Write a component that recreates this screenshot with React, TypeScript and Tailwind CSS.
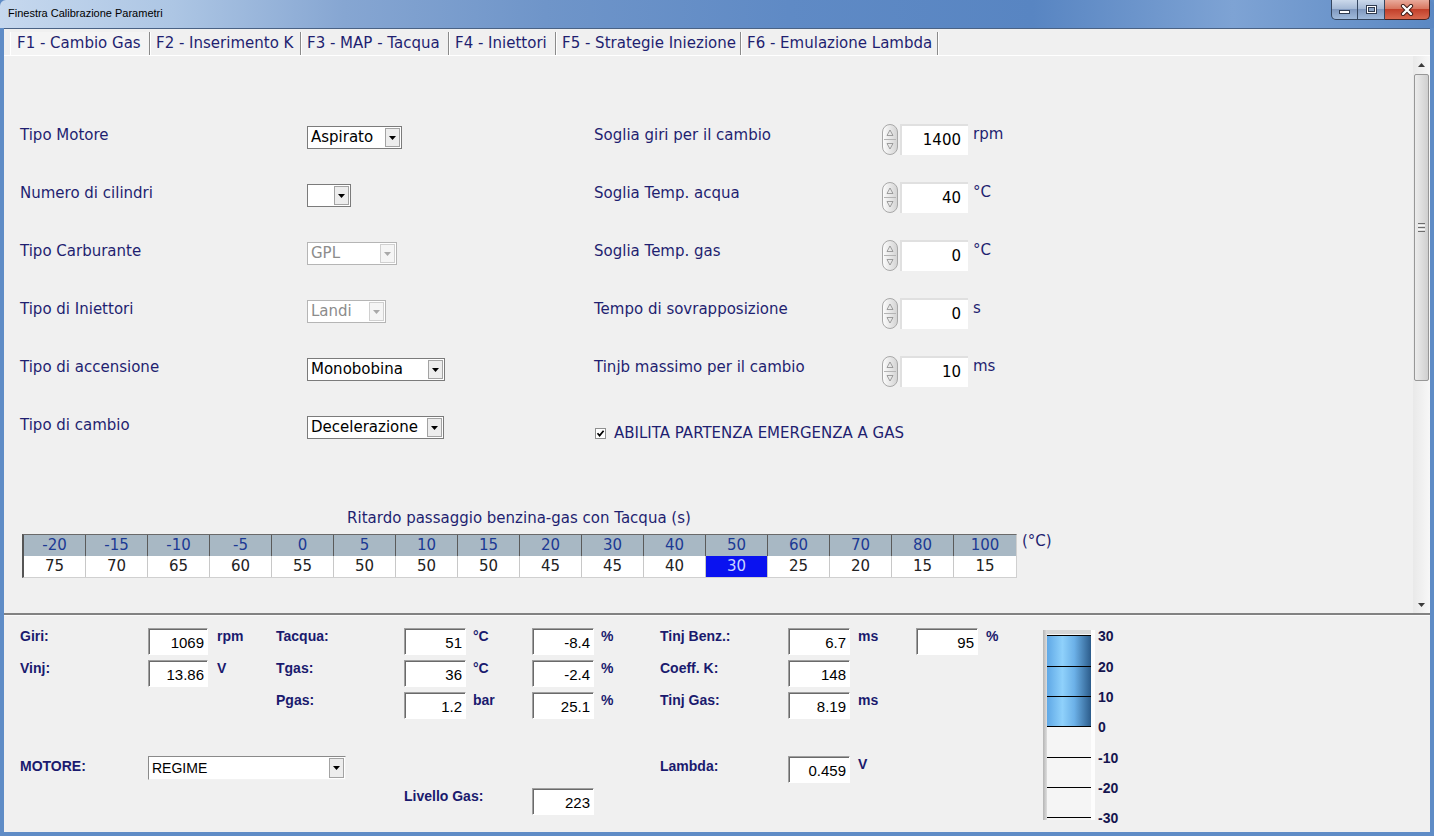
import React from 'react';

const TEMPS = ['-20', '-15', '-10', '-5', '0', '5', '10', '15', '20', '30', '40', '50', '60', '70', '80', '100'];
const DELAYS = ['75', '70', '65', '60', '55', '50', '50', '50', '45', '45', '40', '30', '25', '20', '15', '15'];

const TABS = [
  { label: 'F1 - Cambio Gas', w: 'w-[140px]', active: true },
  { label: 'F2 - Inserimento K', w: 'w-[151px]' },
  { label: 'F3 - MAP - Tacqua', w: 'w-[148px]' },
  { label: 'F4 - Iniettori', w: 'w-[107px]' },
  { label: 'F5 - Strategie Iniezione', w: 'w-[185px]' },
  { label: 'F6 - Emulazione Lambda', w: 'w-[197px]' },
];

function Caret({ disabled }: { disabled?: boolean }) {
  return (
    <svg width="7" height="4" viewBox="0 0 7 4">
      <path d="M0 0h7L3.5 4z" fill={disabled ? '#a9a9a9' : '#000'} />
    </svg>
  );
}

function Combo({ value, className, disabled }: { value: string; className: string; disabled?: boolean }) {
  return (
    <div
      className={`flex h-[23px] bg-white border ${
        disabled ? 'border-[#b5b5b5] text-[#8c8c8c]' : 'border-[#7b7b7b] text-black'
      } ${className}`}
    >
      <div className="flex-1 overflow-hidden whitespace-nowrap pl-[3px] text-[15px] leading-[21px]">{value}</div>
      <div
        className={`m-[1px] flex w-[15px] items-center justify-center border ${
          disabled ? 'border-[#d0d0d0] bg-[#f5f5f5]' : 'border-[#a3a3a3] bg-[#ededed]'
        }`}
      >
        <Caret disabled={disabled} />
      </div>
    </div>
  );
}

function Spin({ value, unit }: { value: string; unit: string }) {
  return (
    <div className="mt-[9px] flex items-start">
      <svg width="17" height="31" viewBox="0 0 17 31">
        <defs>
          <linearGradient id="spinGrad" x1="0" x2="1">
            <stop offset="0" stopColor="#fdfdfd" />
            <stop offset="1" stopColor="#d3d3d3" />
          </linearGradient>
        </defs>
        <rect x="0.5" y="0.5" width="15" height="30" rx="7.5" fill="url(#spinGrad)" stroke="#a8a8a8" />
        <line x1="2" y1="15.5" x2="14" y2="15.5" stroke="#b4b4b4" />
        <path d="M5 11.5 L8 6 L11 11.5 Z" fill="none" stroke="#8a8a8a" strokeWidth="0.8" />
        <path d="M5 19.5 L8 25 L11 19.5 Z" fill="none" stroke="#8a8a8a" strokeWidth="0.8" />
      </svg>
      <div className="ml-[1px] h-[31px] w-[68px] border-l-2 border-t-2 border-[#e0e0e0] bg-white pr-[7px] text-right text-[15px] leading-[29px] text-black">
        {value}
      </div>
      <span className="ml-[5px] mt-[3px] text-[15px] leading-[14px] text-[#1f1f70]">{unit}</span>
    </div>
  );
}

function Row({ children }: { children: React.ReactNode }) {
  return <div className="flex h-[58px] items-center">{children}</div>;
}

function Label({ children, className = '' }: { children: React.ReactNode; className?: string }) {
  return <div className={`text-[15px] text-[#1f1f70] ${className}`}>{children}</div>;
}

function Box({ value, className = '' }: { value: string; className?: string }) {
  return (
    <div
      className={`h-[27px] border border-b-white border-l-[#a0a0a0] border-r-white border-t-[#a0a0a0] bg-white pr-[3px] text-right text-[15px] leading-[27px] text-black shadow-[inset_1px_1px_0_#6a6a6a] ${className}`}
    >
      {value}
    </div>
  );
}

function BLabel({ children, className = '' }: { children: React.ReactNode; className?: string }) {
  return <div className={`pt-[1px] text-[14px] font-bold leading-[14px] text-[#1a1a6e] ${className}`}>{children}</div>;
}

function Unit({ children, className = '' }: { children: React.ReactNode; className?: string }) {
  return <div className={`pt-[1px] text-[14px] font-bold leading-[14px] text-[#1a1a6e] ${className}`}>{children}</div>;
}

function Gauge() {
  const ticks = [5, 36, 66, 96, 127, 157, 187];
  const labels = ['30', '20', '10', '0', '-10', '-20', '-30'];
  return (
    <svg width="90" height="198" viewBox="0 0 90 198" overflow="visible" className="mt-[2px]">
      <defs>
        <linearGradient id="gaugeFill" x1="0" x2="1">
          <stop offset="0" stopColor="#5fa8e6" />
          <stop offset="0.35" stopColor="#8fd1fb" />
          <stop offset="0.62" stopColor="#6cb1e8" />
          <stop offset="1" stopColor="#2c5c8b" />
        </linearGradient>
        <linearGradient id="gaugeEdge" x1="0" x2="1">
          <stop offset="0" stopColor="#b4b4b4" />
          <stop offset="1" stopColor="#dedede" />
        </linearGradient>
      </defs>
      <rect x="0" y="0" width="52" height="190" fill="#f5f5f5" />
      <rect x="0" y="0" width="52" height="4" fill="#d6d6d6" />
      <rect x="0" y="0" width="4" height="190" fill="url(#gaugeEdge)" />
      <rect x="48" y="0" width="4" height="190" fill="#fdfdfd" />
      <rect x="4" y="5" width="44" height="91" fill="url(#gaugeFill)" />
      {ticks.map((y) => (
        <line key={y} x1="4" x2="48" y1={y + 0.5} y2={y + 0.5} stroke="#000" strokeWidth="1" />
      ))}
      {labels.map((l, i) => (
        <text
          key={l}
          x="55"
          y={ticks[i] + 6}
          fontFamily="Liberation Sans, Arial, sans-serif"
          fontWeight="bold"
          fontSize="14"
          fill="#15154f"
        >
          {l}
        </text>
      ))}
    </svg>
  );
}

function ScrollBar() {
  return (
    <div className="flex w-[17px] flex-col bg-[linear-gradient(to_right,#e9e9e9,#f7f7f7)]">
      <div className="flex h-[17px] items-center justify-center">
        <svg width="7" height="4" viewBox="0 0 7 4">
          <path d="M0 4h7L3.5 0z" fill="#3c3c3c" />
        </svg>
      </div>
      <div className="flex flex-1 flex-col px-[1px]">
        <div className="mt-[1px] flex h-[307px] items-center justify-center rounded-[2px] border border-[#979797] bg-[linear-gradient(to_right,#ececec,#dedede_50%,#cfcfcf)]">
          <div className="flex flex-col gap-[1px]">
            <div className="h-[1px] w-[7px] bg-[#6d6d6d]" />
            <div className="h-[1px] w-[7px] bg-[#f8f8f8]" />
            <div className="h-[1px] w-[7px] bg-[#6d6d6d]" />
            <div className="h-[1px] w-[7px] bg-[#f8f8f8]" />
            <div className="h-[1px] w-[7px] bg-[#6d6d6d]" />
          </div>
        </div>
      </div>
      <div className="flex h-[17px] items-center justify-center">
        <svg width="7" height="4" viewBox="0 0 7 4">
          <path d="M0 0h7L3.5 4z" fill="#3c3c3c" />
        </svg>
      </div>
    </div>
  );
}

function TitleBar() {
  return (
    <div className="flex h-[28px] items-start justify-between rounded-t-[6px] bg-[linear-gradient(to_right,#c6d8ee_0%,#adc6e4_12%,#86a6d2_24%,#6f95c9_38%,#5f8ac5_55%,#5885c2_72%,#7ea3d4_86%,#5b88c3_100%)]">
      <div className="pl-[8px] pt-[7px] font-['Liberation_Sans',Arial,sans-serif] text-[11px] leading-[13px] text-black">
        Finestra Calibrazione Parametri
      </div>
      <div className="mr-[4px] flex h-[20px]">
        <div className="flex h-[20px] w-[27px] items-center justify-center rounded-bl-[5px] border border-t-0 border-[#34465f] bg-[linear-gradient(#cbd9eb,#a6bad6_45%,#8099bf_50%,#a0badb)]">
          <div className="mt-[5px] h-[4px] w-[11px] border border-[#2f3b4f] bg-white" />
        </div>
        <div className="flex h-[20px] w-[27px] items-center justify-center border-b border-r border-[#34465f] bg-[linear-gradient(#cbd9eb,#a6bad6_45%,#8099bf_50%,#a0badb)]">
          <div className="h-[9px] w-[11px] border border-[#2f3b4f] bg-white p-[1px]">
            <div className="h-full w-full border border-[#2f3b4f] bg-[#8ea7c8]" />
          </div>
        </div>
        <div className="flex h-[20px] w-[45px] items-center justify-center rounded-br-[5px] border-b border-r border-[#4a2320] bg-[linear-gradient(#e9ab9c,#d87761_45%,#c2402b_50%,#d9694f)]">
          <svg width="14" height="12" viewBox="0 0 14 12">
            <path d="M3 2 L11 10 M11 2 L3 10" stroke="#3a1a16" strokeWidth="4.2" strokeLinecap="round" />
            <path d="M3 2 L11 10 M11 2 L3 10" stroke="#fff" strokeWidth="2.4" strokeLinecap="round" />
          </svg>
        </div>
      </div>
    </div>
  );
}

export default function App() {
  return (
    <div className="flex h-[836px] w-[1434px] flex-col overflow-hidden bg-[#5f8cc6]">
      <TitleBar />
      <div className="mx-[4px] mb-[4px] flex flex-1 flex-col border-t border-[#4a6284] bg-[#f0f0f0] font-['DejaVu_Sans',Verdana,sans-serif]">
        {/* Tabs */}
        <div className="flex h-[27px] items-stretch border-b border-white pl-[6px] pt-[3px]">
          {TABS.map((t) => (
            <div
              key={t.label}
              className={`${t.w} flex items-center whitespace-nowrap border-r border-r-[#8a8a8a] pl-[6px] text-[15px] text-[#1f1f70] shadow-[1px_0_0_#ffffff] ${
                t.active ? 'border-l border-l-white bg-[#f4f4f4]' : ''
              }`}
            >
              {t.label}
            </div>
          ))}
        </div>

        {/* Scrolling parameter area */}
        <div className="flex h-[559px] border-b-2 border-[#828282]">
          <div className="flex-1 pl-[16px] pt-[50px]">
            <div className="flex">
              <div className="flex w-[574px] flex-col">
                <Row>
                  <Label className="w-[287px]">Tipo Motore</Label>
                  <Combo value="Aspirato" className="mt-[5px] w-[95px]" />
                </Row>
                <Row>
                  <Label className="w-[287px]">Numero di cilindri</Label>
                  <Combo value="" className="mt-[5px] w-[44px]" />
                </Row>
                <Row>
                  <Label className="w-[287px]">Tipo Carburante</Label>
                  <Combo value="GPL" className="mt-[5px] w-[90px]" disabled />
                </Row>
                <Row>
                  <Label className="w-[287px]">Tipo di Iniettori</Label>
                  <Combo value="Landi" className="mt-[5px] w-[79px]" disabled />
                </Row>
                <Row>
                  <Label className="w-[287px]">Tipo di accensione</Label>
                  <Combo value="Monobobina" className="mt-[5px] w-[138px]" />
                </Row>
                <Row>
                  <Label className="w-[287px]">Tipo di cambio</Label>
                  <Combo value="Decelerazione" className="mt-[5px] w-[137px]" />
                </Row>
              </div>
              <div className="flex flex-col">
                <Row>
                  <Label className="w-[288px]">Soglia giri per il cambio</Label>
                  <Spin value="1400" unit="rpm" />
                </Row>
                <Row>
                  <Label className="w-[288px]">Soglia Temp. acqua</Label>
                  <Spin value="40" unit="°C" />
                </Row>
                <Row>
                  <Label className="w-[288px]">Soglia Temp. gas</Label>
                  <Spin value="0" unit="°C" />
                </Row>
                <Row>
                  <Label className="w-[288px]">Tempo di sovrapposizione</Label>
                  <Spin value="0" unit="s" />
                </Row>
                <Row>
                  <Label className="w-[288px]">Tinjb massimo per il cambio</Label>
                  <Spin value="10" unit="ms" />
                </Row>
                <Row>
                  <div className="mt-[16px] flex items-center">
                    <div className="ml-[1px] flex h-[11px] w-[11px] items-center justify-center border border-[#8e8f8f] bg-white">
                      <svg width="9" height="9" viewBox="0 0 9 9">
                        <path d="M1.5 4.3 L3.6 6.6 L7.6 1.8" fill="none" stroke="#000" strokeWidth="1.7" />
                      </svg>
                    </div>
                    <span className="ml-[8px] text-[15px] text-[#1f1f70]">ABILITA PARTENZA EMERGENZA A GAS</span>
                  </div>
                </Row>
              </div>
            </div>

            {/* Delay table */}
            <div className="ml-[2px] mt-[55px] w-[994px] text-center text-[15px] leading-[18px] text-[#1f1f70]">
              Ritardo passaggio benzina-gas con Tacqua (s)
            </div>
            <div className="ml-[2px] mt-[7px] flex items-start">
              <div className="border-b border-l-2 border-r border-t border-b-[#d0d0d0] border-l-[#555555] border-r-[#d0d0d0] border-t-[#6a6a6a]">
                <div className="grid grid-cols-[repeat(16,62px)] bg-[#a8b8c4]">
                  {TEMPS.map((t, i) => (
                    <div
                      key={i}
                      className={`h-[21px] text-center text-[15px] leading-[21px] text-[#1c3a94] ${
                        i < 15 ? 'border-r border-[#5a5a5a]' : ''
                      }`}
                    >
                      {t}
                    </div>
                  ))}
                </div>
                <div className="grid grid-cols-[repeat(16,62px)] bg-white">
                  {DELAYS.map((d, i) => (
                    <div
                      key={i}
                      className={`h-[21px] text-center text-[15px] leading-[21px] ${
                        i === 11 ? 'bg-[#0a12f0] text-[#c9d4ff]' : 'text-[#222222]'
                      } ${i < 15 ? 'border-r border-[#c8c8c8]' : ''}`}
                    >
                      {d}
                    </div>
                  ))}
                </div>
              </div>
              <div className="-mt-[1px] ml-[5px] text-[15px] leading-[16px] text-[#1f1f70]">(°C)</div>
            </div>
          </div>
          <ScrollBar />
        </div>

        {/* Live values panel */}
        <div className="flex-1 border-t border-[#fafafa] pl-[16px] pt-[12px] font-['Liberation_Sans',Arial,sans-serif]">
          <div className="grid grid-cols-[128px_60px_68px_128px_62px_66px_62px_66px_128px_62px_66px_62px_65px_100px] grid-rows-[repeat(6,32px)]">
            <BLabel className="col-start-1 row-start-1">Giri:</BLabel>
            <Box value="1069" className="col-start-2 row-start-1" />
            <Unit className="col-start-3 row-start-1 pl-[9px]">rpm</Unit>

            <BLabel className="col-start-1 row-start-2">Vinj:</BLabel>
            <Box value="13.86" className="col-start-2 row-start-2" />
            <Unit className="col-start-3 row-start-2 pl-[9px]">V</Unit>

            <BLabel className="col-start-4 row-start-1">Tacqua:</BLabel>
            <Box value="51" className="col-start-5 row-start-1" />
            <Unit className="col-start-6 row-start-1 pl-[7px]">°C</Unit>
            <Box value="-8.4" className="col-start-7 row-start-1" />
            <Unit className="col-start-8 row-start-1 pl-[7px]">%</Unit>

            <BLabel className="col-start-4 row-start-2">Tgas:</BLabel>
            <Box value="36" className="col-start-5 row-start-2" />
            <Unit className="col-start-6 row-start-2 pl-[7px]">°C</Unit>
            <Box value="-2.4" className="col-start-7 row-start-2" />
            <Unit className="col-start-8 row-start-2 pl-[7px]">%</Unit>

            <BLabel className="col-start-4 row-start-3">Pgas:</BLabel>
            <Box value="1.2" className="col-start-5 row-start-3" />
            <Unit className="col-start-6 row-start-3 pl-[7px]">bar</Unit>
            <Box value="25.1" className="col-start-7 row-start-3" />
            <Unit className="col-start-8 row-start-3 pl-[7px]">%</Unit>

            <BLabel className="col-start-9 row-start-1">Tinj Benz.:</BLabel>
            <Box value="6.7" className="col-start-10 row-start-1" />
            <Unit className="col-start-11 row-start-1 pl-[8px]">ms</Unit>
            <Box value="95" className="col-start-12 row-start-1" />
            <Unit className="col-start-13 row-start-1 pl-[8px]">%</Unit>

            <BLabel className="col-start-9 row-start-2">Coeff. K:</BLabel>
            <Box value="148" className="col-start-10 row-start-2" />

            <BLabel className="col-start-9 row-start-3">Tinj Gas:</BLabel>
            <Box value="8.19" className="col-start-10 row-start-3" />
            <Unit className="col-start-11 row-start-3 pl-[8px]">ms</Unit>

            <BLabel className="col-start-1 row-start-5 pt-[3px]">MOTORE:</BLabel>
            <div className="col-span-3 col-start-2 row-start-5 flex h-[24px] w-[198px] border border-b-[#f2f2f2] border-l-[#8a8a8a] border-r-[#f2f2f2] border-t-[#8a8a8a] bg-white">
              <div className="flex-1 pl-[3px] text-[14px] leading-[22px] text-black">REGIME</div>
              <div className="m-[1px] flex w-[15px] items-center justify-center border border-[#a3a3a3] bg-[#ededed]">
                <Caret />
              </div>
            </div>

            <BLabel className="col-start-9 row-start-5 pt-[3px]">Lambda:</BLabel>
            <Box value="0.459" className="col-start-10 row-start-5" />
            <Unit className="col-start-11 row-start-5 pl-[8px]">V</Unit>

            <BLabel className="col-span-2 col-start-5 row-start-6">Livello Gas:</BLabel>
            <Box value="223" className="col-start-7 row-start-6" />

            <div className="col-start-14 row-span-6 row-start-1 h-[192px]">
              <Gauge />
            </div>
          </div>
        </div>
      </div>
    </div>
  );
}
